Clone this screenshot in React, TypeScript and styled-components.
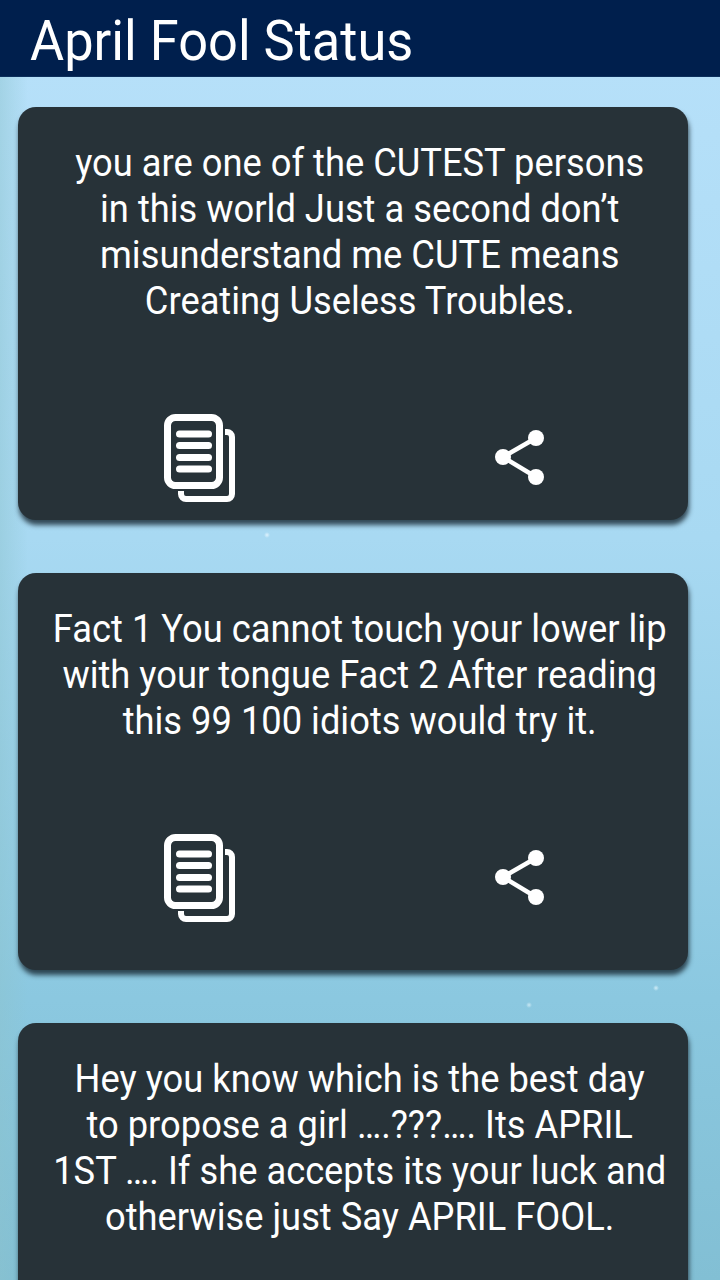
import styled, { createGlobalStyle } from 'styled-components';

const GlobalStyle = createGlobalStyle`
  html, body {
    margin: 0;
    padding: 0;
    height: 1280px;
    overflow: hidden;
    font-family: Roboto, "Liberation Sans", sans-serif;
  }
`;

const Page = styled.div`
  width: 720px;
  height: 1280px;
  overflow: hidden;
  background:
    radial-gradient(circle at 267px 535px, rgba(235, 248, 255, 0.8) 0, transparent 3px),
    radial-gradient(circle at 656px 988px, rgba(225, 245, 252, 0.8) 0, transparent 3px),
    radial-gradient(circle at 529px 1005px, rgba(225, 245, 252, 0.7) 0, transparent 3px),
    linear-gradient(90deg, rgba(140, 195, 205, 0.45) 0, rgba(140, 195, 205, 0) 28px),
    linear-gradient(180deg, #b8e1fa 0%, #a8d9f2 42%, #8bc8e0 78%, #82bfd4 100%);
`;

const TitleBar = styled.header`
  height: 77px;
  box-sizing: border-box;
  padding-left: 30px;
  background: #001f4d;
  border-bottom: 1px solid #0c2f5c;
  color: #fff;
  font-size: 56px;
  line-height: 82px;
  white-space: nowrap;
`;

const TitleText = styled.span`
  display: inline-block;
  transform: scaleX(0.935);
  transform-origin: left center;
`;

const List = styled.div`
  display: flex;
  flex-direction: column;
  padding: 30px 32px 0 18px;
`;

const Card = styled.article<{ $gap: number; $bottom: number }>`
  box-sizing: border-box;
  padding: 33px 0 ${p => p.$bottom}px;
  margin-bottom: ${p => p.$gap}px;
  border-radius: 18px;
  background: #273238;
  box-shadow: 1px 5px 5px rgba(20, 36, 46, 0.8);
`;

const Message = styled.p`
  margin: 0;
  padding-left: 14px;
  color: #fff;
  font-size: 38px;
  line-height: 46px;
  text-align: center;
  white-space: nowrap;
  transform: scaleX(0.955);
`;

const Actions = styled.div`
  display: grid;
  grid-template-columns: 320px 320px;
  padding-left: 22px;
  margin-top: 91px;
`;

const ActionCell = styled.div`
  display: flex;
  justify-content: center;
  align-items: center;
  height: 86px;
`;

const CopyIcon = () => (
  <svg width="72" height="88" viewBox="0 0 72 88" fill="none">
    <path d="M61 18h2a5 5 0 0 1 5 5v57a5 5 0 0 1-5 5H22a5 5 0 0 1-5-5v-3" stroke="#fff" strokeWidth="6" />
    <rect x="3.5" y="3.5" width="52" height="68" rx="8" stroke="#fff" strokeWidth="7" />
    <g stroke="#fff" strokeWidth="7" strokeLinecap="round">
      <line x1="15.5" y1="20" x2="44.5" y2="20" />
      <line x1="15.5" y1="31.5" x2="44.5" y2="31.5" />
      <line x1="15.5" y1="43.5" x2="44.5" y2="43.5" />
      <line x1="15.5" y1="55" x2="44.5" y2="55" />
    </g>
  </svg>
);

const ShareIcon = () => (
  <svg width="50" height="56" viewBox="0 0 50 56" fill="#fff">
    <line x1="8" y1="27" x2="41" y2="8" stroke="#fff" strokeWidth="4.5" />
    <line x1="8" y1="27" x2="41" y2="47" stroke="#fff" strokeWidth="4.5" />
    <circle cx="41" cy="8" r="8" />
    <circle cx="8" cy="27" r="8" />
    <circle cx="41" cy="47" r="8" />
  </svg>
);

const posts = [
  {
    lines: ['you are one of the CUTEST persons', 'in this world Just a second don’t', 'misunderstand me CUTE means', 'Creating Useless Troubles.'],
    gap: 53,
    bottom: 19,
  },
  {
    lines: ['Fact 1 You cannot touch your lower lip', 'with your tongue Fact 2 After reading', 'this 99 100 idiots would try it.'],
    gap: 53,
    bottom: 49,
  },
  {
    lines: ['Hey you know which is the best day', 'to propose a girl ….???…. Its APRIL', '1ST …. If she accepts its your luck and', 'otherwise just Say APRIL FOOL.'],
    gap: 0,
    bottom: 22,
  },
];

export default function App() {
  return (
    <Page>
      <GlobalStyle />
      <TitleBar>
        <TitleText>April Fool Status</TitleText>
      </TitleBar>
      <List>
        {posts.map(post => (
          <Card key={post.lines[0]} $gap={post.gap} $bottom={post.bottom}>
            <Message>
              {post.lines.map(line => (
                <span key={line}>
                  {line}
                  <br />
                </span>
              ))}
            </Message>
            <Actions>
              <ActionCell>
                <CopyIcon />
              </ActionCell>
              <ActionCell>
                <ShareIcon />
              </ActionCell>
            </Actions>
          </Card>
        ))}
      </List>
    </Page>
  );
}
